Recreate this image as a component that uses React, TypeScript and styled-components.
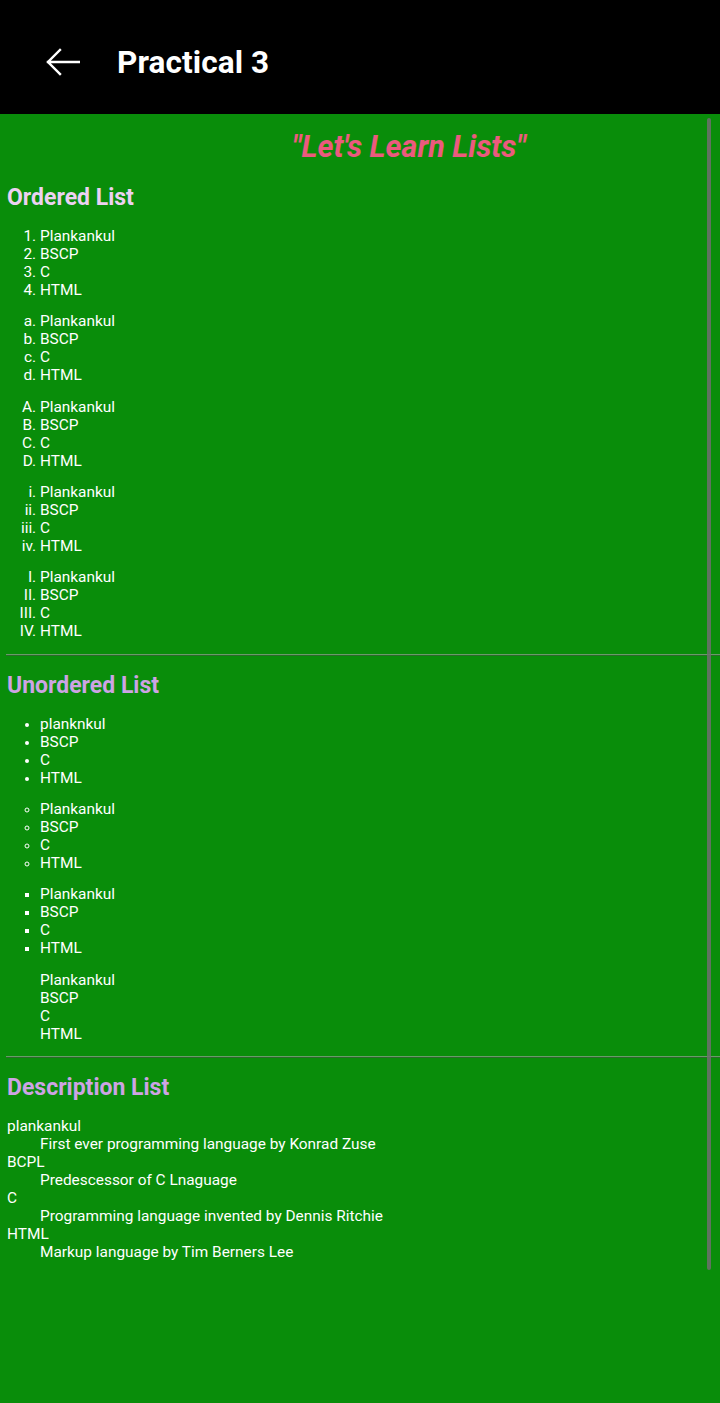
import React from "react";
import styled, { createGlobalStyle } from "styled-components";

const GlobalStyle = createGlobalStyle`
  html, body {
    margin: 0;
    padding: 0;
    background: #098d0a;
  }
  body {
    font-family: Roboto, "Noto Sans", "Liberation Sans", sans-serif;
    color: #ffffff;
  }
`;

const Page = styled.div`
  position: relative;
  min-height: 1403px;
  background: #098d0a;
`;

const AppBar = styled.header`
  height: 114px;
  background: #000000;
  display: flex;
  align-items: center;
  padding: 10px 0 0 46px;
  box-sizing: border-box;
`;

const BackButton = styled.button`
  background: none;
  border: none;
  padding: 0;
  width: 34px;
  height: 34px;
  display: flex;
  align-items: center;
  justify-content: center;
  margin-right: 37px;
  color: #fff;
`;

const BarTitle = styled.h1`
  margin: 0;
  font-size: 31.5px;
  font-weight: 700;
  color: #ffffff;
  letter-spacing: 0.1px;
`;

const Content = styled.main`
  padding: 16px 0 0 7px;
  font-size: 15.4px;
  line-height: 18px;
`;

const Tagline = styled.div`
  padding-left: 285px;
  font-size: 30.5px;
  line-height: 34px;
  font-style: italic;
  font-weight: 700;
  color: #ec5a7e;
  height: 34px;
`;

const SectionHeading = styled.h2<{ $tone: string; $top: number }>`
  margin: ${(p) => p.$top}px 0 16px 0;
  font-size: 23px;
  line-height: 27px;
  font-weight: 700;
  color: ${(p) => p.$tone};
`;

const OrderedList = styled.ol`
  margin: 13.3px 0 0 0;
  padding-left: 33px;
`;

const UnorderedList = styled.ul<{ $marker: string }>`
  margin: 13.3px 0 0 0;
  padding-left: 33px;
  list-style-type: ${(p) => p.$marker};
  & li::marker {
    font-size: 13px;
  }
`;

const Item = styled.li``;

const Divider = styled.hr`
  margin: 13.5px 0 0 -1px;
  border: none;
  border-top: 1px solid #6a9a6a;
  border-bottom: 1px solid #2a6a2a;
  height: 0;
`;

const DescList = styled.dl`
  margin: 14px 0 0 0;
`;

const Term = styled.dt``;

const Detail = styled.dd`
  margin-left: 33px;
`;

const ScrollThumb = styled.div`
  position: absolute;
  top: 118px;
  right: 9px;
  width: 4px;
  height: 1152px;
  background: rgba(110, 110, 110, 0.85);
  border-radius: 2px;
`;

const items = ["Plankankul", "BSCP", "C", "HTML"];

const ArrowLeft = () => (
  <svg width="34" height="28" viewBox="0 0 34 28" fill="none">
    <path
      d="M33 14H2M14 2L2 14L14 26"
      stroke="#fff"
      strokeWidth="2.4"
      strokeLinecap="square"
      strokeLinejoin="miter"
    />
  </svg>
);

const orderedTypes: Array<"1" | "a" | "A" | "i" | "I"> = ["1", "a", "A", "i", "I"];

export default function App() {
  return (
    <Page>
      <GlobalStyle />
      <AppBar>
        <BackButton aria-label="Back">
          <ArrowLeft />
        </BackButton>
        <BarTitle>Practical 3</BarTitle>
      </AppBar>
      <Content>
        <Tagline>"Let's Learn Lists"</Tagline>
        <SectionHeading $tone="#ecd2f2" $top={20}>
          Ordered List
        </SectionHeading>
        {orderedTypes.map((t) => (
          <OrderedList key={t} type={t}>
            {items.map((it) => (
              <Item key={it}>{it}</Item>
            ))}
          </OrderedList>
        ))}
        <Divider />
        <SectionHeading $tone="#cda4e4" $top={16}>
          Unordered List
        </SectionHeading>
        <UnorderedList $marker="disc">
          {["planknkul", "BSCP", "C", "HTML"].map((it) => (
            <Item key={it}>{it}</Item>
          ))}
        </UnorderedList>
        <UnorderedList $marker="circle">
          {items.map((it) => (
            <Item key={it}>{it}</Item>
          ))}
        </UnorderedList>
        <UnorderedList $marker="square">
          {items.map((it) => (
            <Item key={it}>{it}</Item>
          ))}
        </UnorderedList>
        <UnorderedList $marker="none">
          {items.map((it) => (
            <Item key={it}>{it}</Item>
          ))}
        </UnorderedList>
        <Divider />
        <SectionHeading $tone="#cda4e4" $top={16}>
          Description List
        </SectionHeading>
        <DescList>
          <Term>plankankul</Term>
          <Detail>First ever programming language by Konrad Zuse</Detail>
          <Term>BCPL</Term>
          <Detail>Predescessor of C Lnaguage</Detail>
          <Term>C</Term>
          <Detail>Programming language invented by Dennis Ritchie</Detail>
          <Term>HTML</Term>
          <Detail>Markup language by Tim Berners Lee</Detail>
        </DescList>
      </Content>
      <ScrollThumb />
    </Page>
  );
}
